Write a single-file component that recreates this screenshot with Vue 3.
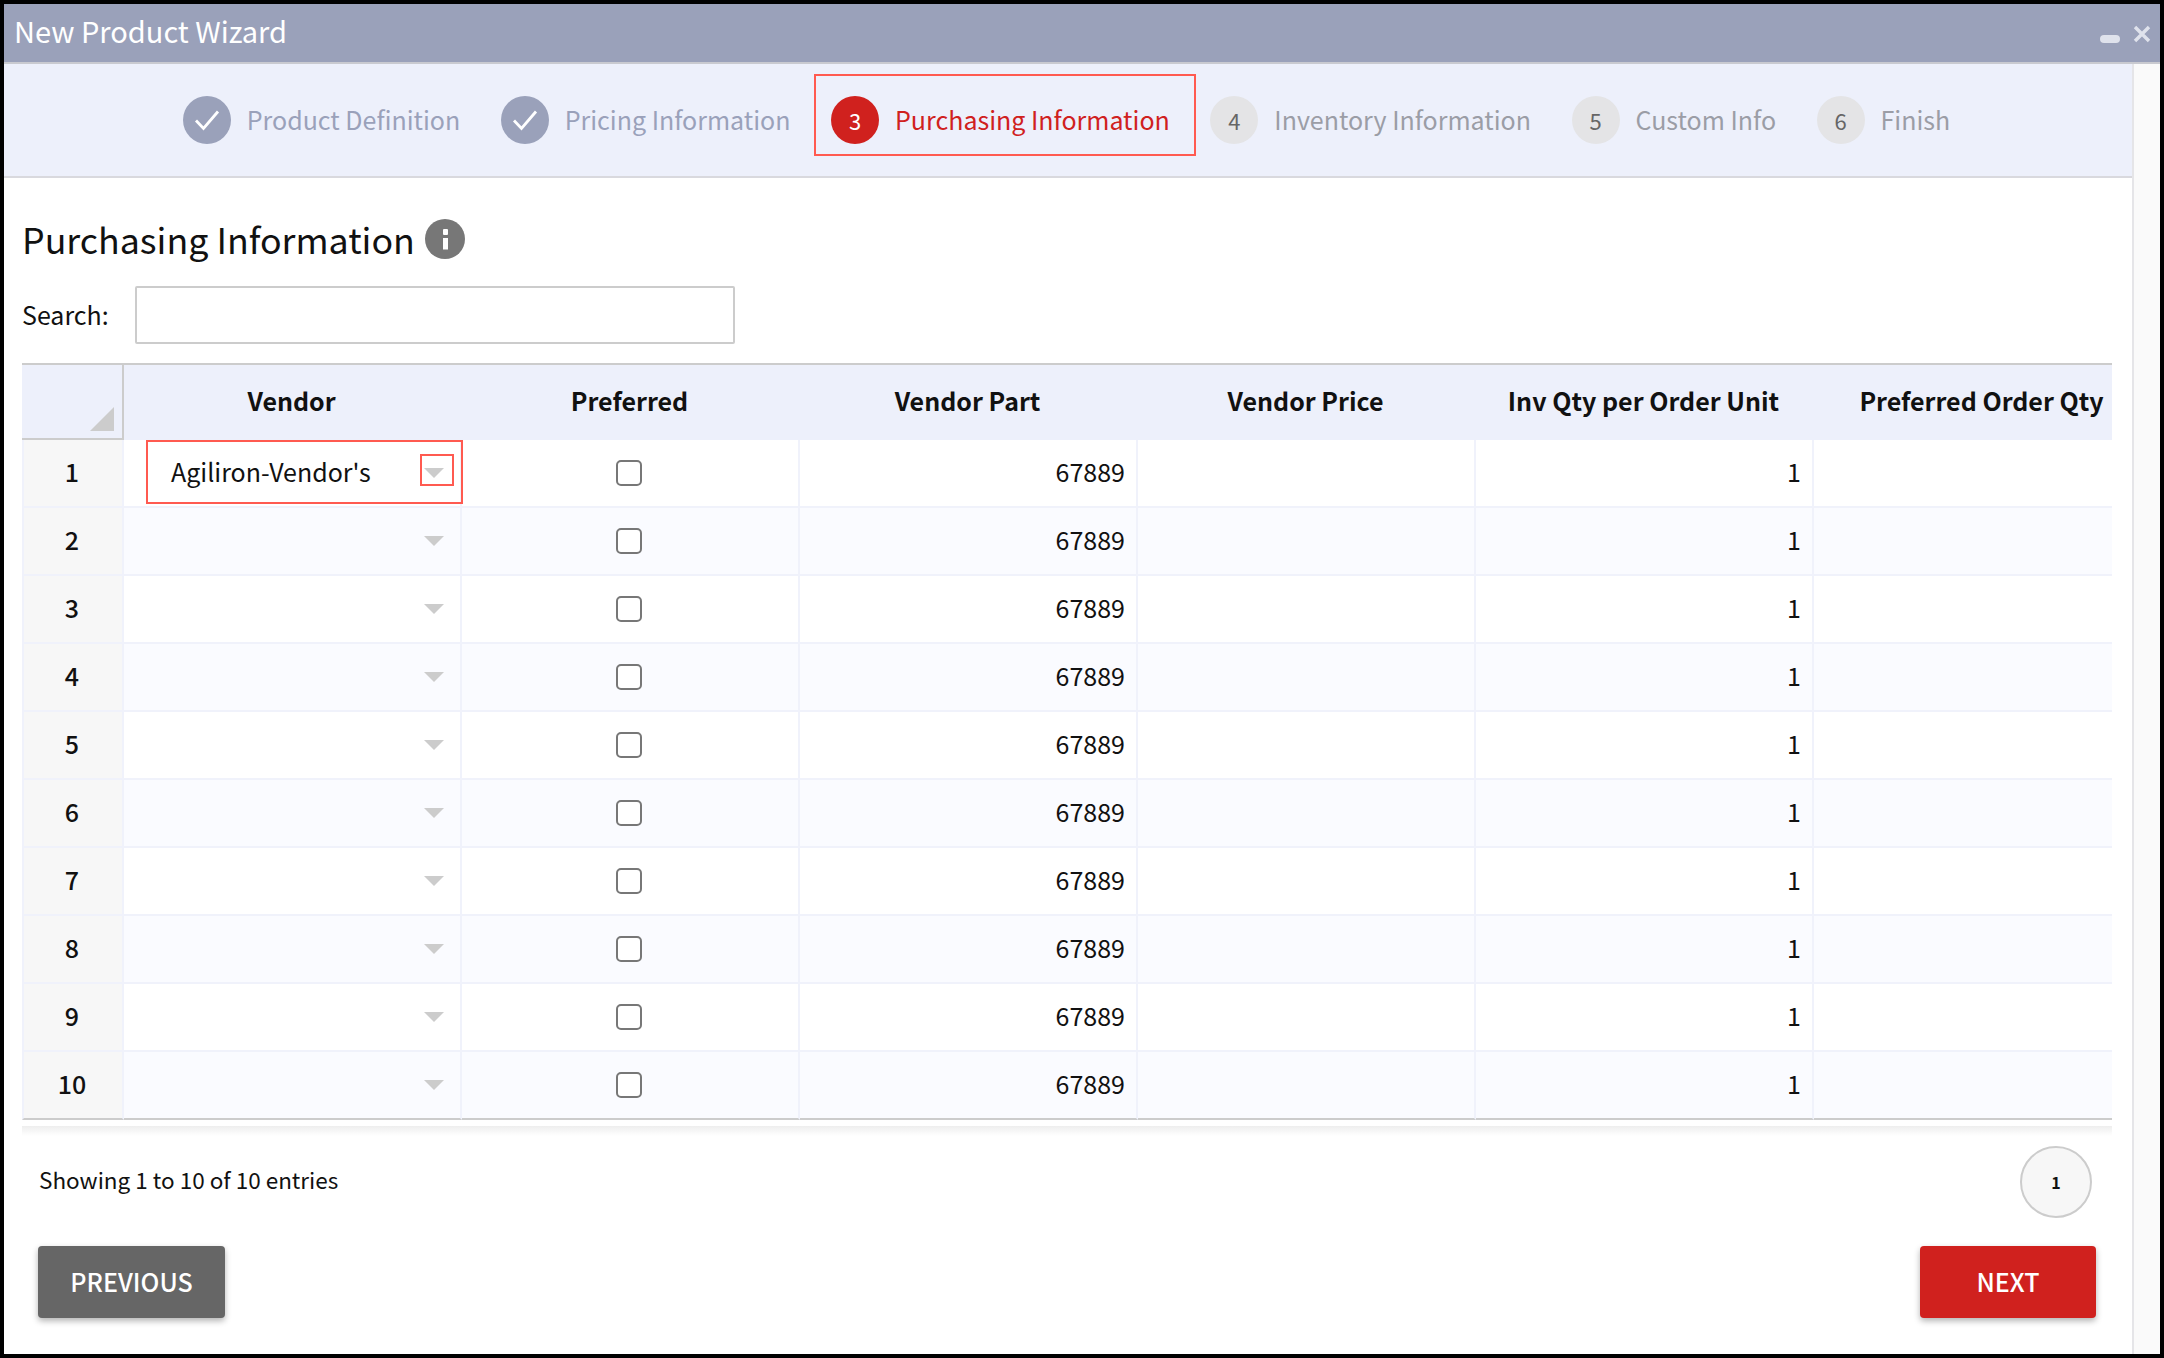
<template>
  <div class="window">
    <header class="title-bar">
      <span class="title">New Product Wizard</span>
      <div class="window-actions">
        <span class="minimize"></span>
        <svg class="close" width="18" height="18" viewBox="0 0 18 18">
          <path d="M2 2l14 14M16 2L2 16" stroke="#dfe2ec" stroke-width="3.4" fill="none" />
        </svg>
      </div>
    </header>

    <div class="window-body">
      <main class="content">
        <nav class="steps">
          <div
            v-for="(step, i) in steps"
            :key="step.name"
            class="step"
            :class="step.state"
          >
            <span class="step-circle">
              <svg v-if="step.state === 'done'" width="26" height="22" viewBox="0 0 26 22">
                <path d="M2 11.5l7.5 8L24 2.5" stroke="#fff" stroke-width="2.8" fill="none" />
              </svg>
              <template v-else>{{ i + 1 }}</template>
            </span>
            <span class="step-name">{{ step.name }}</span>
          </div>
        </nav>

        <section class="panel">
          <div class="heading">
            <h1>Purchasing Information</h1>
            <svg class="info" width="40" height="40" viewBox="0 0 40 40">
              <circle cx="20" cy="20" r="20" fill="#777" />
              <rect x="18" y="10" width="5" height="6" rx="1" fill="#fff" />
              <rect x="18" y="19" width="5" height="11.5" fill="#fff" />
            </svg>
          </div>

          <div class="search">
            <label for="search-box">Search:</label>
            <input id="search-box" type="text" />
          </div>

          <div class="table-wrap">
            <table>
              <thead>
                <tr>
                  <th class="corner"><span class="corner-mark"></span></th>
                  <th v-for="col in columns" :key="col">{{ col }}</th>
                </tr>
              </thead>
              <tbody>
                <tr v-for="n in 10" :key="n" :class="{ even: n % 2 === 0 }">
                  <td class="row-num">{{ n }}</td>
                  <td class="vendor">
                    <span v-if="n === 1" class="vendor-name">Agiliron-Vendor's</span>
                    <span class="arrow"></span>
                    <template v-if="n === 1">
                      <span class="mark mark-cell"></span>
                      <span class="mark mark-arrow"></span>
                    </template>
                  </td>
                  <td class="center"><span class="checkbox"></span></td>
                  <td class="num">67889</td>
                  <td></td>
                  <td class="num">1</td>
                  <td></td>
                </tr>
              </tbody>
            </table>
          </div>
          <div class="table-shadow"></div>

          <div class="table-info">
            <span class="entries">Showing 1 to 10 of 10 entries</span>
            <span class="page">1</span>
          </div>

          <div class="actions">
            <button class="btn previous">PREVIOUS</button>
            <button class="btn next">NEXT</button>
          </div>
        </section>
      </main>
      <aside class="scroll-track"></aside>
    </div>
  </div>
</template>

<script setup>
const steps = [
  { name: "Product Definition", state: "done" },
  { name: "Pricing Information", state: "done" },
  { name: "Purchasing Information", state: "active" },
  { name: "Inventory Information", state: "pending" },
  { name: "Custom Info", state: "pending" },
  { name: "Finish", state: "pending" },
];

const columns = [
  "Vendor",
  "Preferred",
  "Vendor Part",
  "Vendor Price",
  "Inv Qty per Order Unit",
  "Preferred Order Qty",
];
</script>

<style>
html,
body {
  margin: 0;
  background: #000;
}
</style>

<style scoped>
.window {
  box-sizing: border-box;
  width: 2156px;
  height: 1350px;
  margin: 4px;
  display: flex;
  flex-direction: column;
  background: #fff;
  color: #111;
  font-family: "Noto Sans CJK SC", "Noto Sans", sans-serif;
  font-size: 25px;
  overflow: hidden;
}

.title-bar {
  flex: none;
  height: 58px;
  display: flex;
  align-items: center;
  justify-content: space-between;
  padding: 0 9px 0 10px;
  background: #9aa1ba;
  border-bottom: 2px solid #c9cad0;
}
.title {
  color: #fff;
  font-size: 29px;
  margin-top: -6px;
}
.window-actions {
  display: flex;
  align-items: center;
  gap: 13px;
  margin-top: 2px;
}
.minimize {
  width: 20px;
  height: 8px;
  margin-top: 10px;
  border-radius: 4px;
  background: #dfe2ec;
}

.window-body {
  flex: 1;
  display: flex;
  min-height: 0;
}
.content {
  flex: 1;
  min-width: 0;
  display: flex;
  flex-direction: column;
}
.scroll-track {
  flex: none;
  width: 26px;
  background: #fafafa;
  border-left: 2px solid #e5e5e8;
}

.steps {
  flex: none;
  height: 112px;
  padding: 0 3px 0 0;
  display: flex;
  align-items: center;
  justify-content: center;
  gap: 40.5px;
  background: #edf0fb;
  border-bottom: 2px solid #d9d9de;
}
.step {
  position: relative;
  display: flex;
  align-items: center;
  gap: 16px;
  color: #9aa1ba;
}
.step-name {
  margin-top: -2px;
}
.step-circle {
  width: 48px;
  height: 48px;
  border-radius: 50%;
  display: flex;
  align-items: center;
  justify-content: center;
  font-size: 22px;
}
.step.done .step-circle {
  background: #9aa1ba;
}
.step.active {
  color: #d0211e;
}
.step.active .step-circle {
  background: #d0211e;
  color: #fff;
}
.step.active::after {
  content: "";
  position: absolute;
  left: -17px;
  right: -26px;
  top: -22px;
  bottom: -12px;
  border: 2px solid #ff5a50;
}
.step.pending {
  color: #9b9da6;
}
.step.pending .step-circle {
  background: #e4e4e6;
  color: #666;
}

.panel {
  flex: 1;
  display: flex;
  flex-direction: column;
  padding: 0 20px 0 18px;
}

.heading {
  display: flex;
  align-items: center;
  gap: 10px;
  margin-top: 36px;
  height: 50px;
}
.heading h1 {
  margin: 0;
  font-size: 35.75px;
  font-weight: 400;
  line-height: 50px;
}

.search {
  display: flex;
  align-items: center;
  gap: 26px;
  margin-top: 22px;
}
.search label {
  margin-top: -2px;
}
.search input {
  box-sizing: border-box;
  width: 600px;
  height: 58px;
  padding: 0 10px;
  background: #fff;
  border: 2px solid #ccc;
  border-radius: 2px;
  outline: none;
}

.table-wrap {
  margin-top: 19px;
  overflow: hidden;
  border-top: 2px solid #ccc;
}
table {
  width: 2130px;
  table-layout: fixed;
  border-collapse: separate;
  border-spacing: 0;
}
th {
  width: 338px;
  height: 75px;
  padding: 0 3px 5px 0;
  box-sizing: border-box;
  background: #edf0fb;
  font-weight: 700;
  font-size: 25px;
  text-align: center;
}
th.corner {
  position: relative;
  width: 102px;
  border-right: 2px solid #ccc;
  border-bottom: 2px solid #ccc;
}
.corner-mark {
  position: absolute;
  right: 8px;
  bottom: 7px;
  width: 0;
  height: 0;
  border-left: 24px solid transparent;
  border-bottom: 24px solid #ccc;
}
td {
  position: relative;
  box-sizing: border-box;
  height: 68px;
  padding: 0 11px 5px 12px;
  border-right: 2px solid #f0f2fb;
  border-bottom: 2px solid #f0f2fb;
}
.even td {
  background: #fafbff;
}
td.row-num,
.even td.row-num {
  padding: 0 2px 5px 0;
  background: #f7f7f7;
  border-left: 2px solid #f0f2fb;
  font-weight: 500;
  text-align: center;
}
td:last-child {
  border-right: none;
}
tbody tr:last-child td {
  border-bottom: 2px solid #ccc;
}
.num {
  text-align: right;
}
.center {
  text-align: center;
}

.vendor-name {
  margin-left: 35px;
}
.arrow {
  position: absolute;
  right: 16px;
  top: 28px;
  width: 0;
  height: 0;
  border-left: 10px solid transparent;
  border-right: 10px solid transparent;
  border-top: 10px solid #ccc;
}
.mark {
  position: absolute;
  box-sizing: border-box;
  border: 2px solid #ff5a50;
}
.mark-cell {
  left: 22px;
  right: -3px;
  top: 0;
  bottom: 2px;
}
.mark-arrow {
  right: 6px;
  top: 14px;
  width: 34px;
  height: 32px;
}

.checkbox {
  display: inline-block;
  box-sizing: border-box;
  width: 26px;
  height: 26px;
  margin-top: -4px;
  margin-left: -4px;
  vertical-align: middle;
  border: 2px solid #777;
  border-radius: 5px;
  background: #fff;
}

.table-shadow {
  height: 10px;
  margin-top: 6px;
  background: linear-gradient(#eeeeee, #fff);
}

.table-info {
  display: flex;
  align-items: center;
  justify-content: space-between;
  height: 72px;
  margin-top: 10px;
  padding: 0 20px 0 17px;
  font-size: 22.5px;
}
.entries {
  margin-top: -6px;
}
.page {
  box-sizing: border-box;
  width: 72px;
  height: 72px;
  display: flex;
  align-items: center;
  justify-content: center;
  border: 2px solid #ccc;
  border-radius: 50%;
  background: #f7f7f7;
  font-size: 16px;
  font-weight: 700;
}

.actions {
  display: flex;
  justify-content: space-between;
  margin-top: 28px;
  padding: 0 16px;
}
.btn {
  height: 72px;
  padding-bottom: 3px;
  border: none;
  border-radius: 4px;
  color: #fff;
  font-family: inherit;
  font-size: 25px;
  font-weight: 500;
  box-shadow: 0 3px 6px rgba(0, 0, 0, 0.3);
}
.previous {
  width: 187px;
  background: #666;
}
.next {
  width: 176px;
  background: #d0211e;
}
</style>
